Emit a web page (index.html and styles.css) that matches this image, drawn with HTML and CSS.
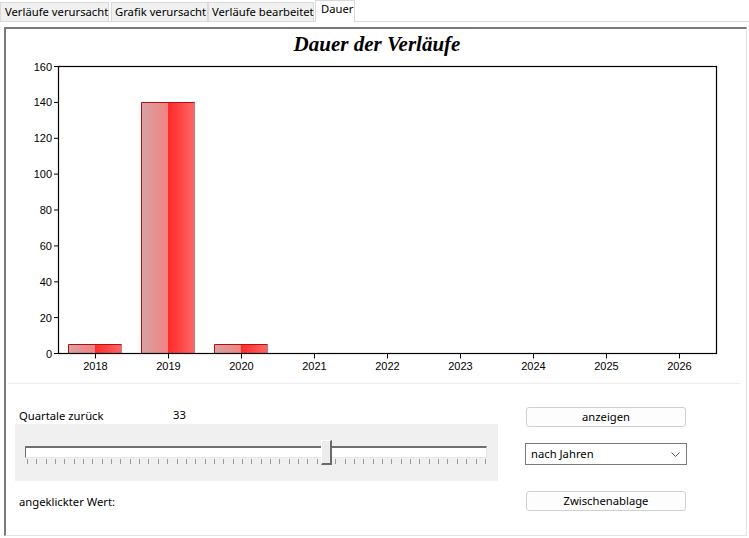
FILE: index.html
```html
<!DOCTYPE html>
<html lang="de">
<head>
<meta charset="utf-8">
<title>Dauer der Verläufe</title>
<link rel="stylesheet" href="styles.css">
</head>
<body>
<div class="tabs">
  <div class="tab t1">Verläufe verursacht</div>
  <div class="tab t2">Grafik verursacht</div>
  <div class="tab t3">Verläufe bearbeitet</div>
  <div class="tab active">Dauer</div>
</div>
<div class="panel">
  <svg class="chart" width="739" height="354" viewBox="0 0 739 354" xmlns="http://www.w3.org/2000/svg">
    <defs>
      <linearGradient id="gl" x1="0" y1="0" x2="1" y2="0">
        <stop offset="0" stop-color="#d6a2a2"/>
        <stop offset="1" stop-color="#f38282"/>
      </linearGradient>
      <linearGradient id="gr" x1="0" y1="0" x2="1" y2="0">
        <stop offset="0" stop-color="#ff2a2a"/>
        <stop offset="0.85" stop-color="#ff5e5e"/>
        <stop offset="1" stop-color="#d77474"/>
      </linearGradient>
    </defs>
    <text class="title" x="371" y="22" text-anchor="middle">Dauer der Verläufe</text>
    <g class="ylab" text-anchor="end">
      <text x="46" y="41.5">160</text>
      <text x="46" y="77.4">140</text>
      <text x="46" y="113.3">120</text>
      <text x="46" y="149.1">100</text>
      <text x="46" y="185">80</text>
      <text x="46" y="220.9">60</text>
      <text x="46" y="256.8">40</text>
      <text x="46" y="292.6">20</text>
      <text x="46" y="328.5">0</text>
    </g>
    <g class="axis" stroke="#000" stroke-width="1">
      <path d="M48 37.5H52M48 73.4H52M48 109.3H52M48 145.1H52M48 181H52M48 216.9H52M48 252.8H52M48 288.6H52M48 324.5H52"/>
      <path d="M89.5 324.5V329.5M162.5 324.5V329.5M235.5 324.5V329.5M308.5 324.5V329.5M381.5 324.5V329.5M454.5 324.5V329.5M527.5 324.5V329.5M600.5 324.5V329.5M673.5 324.5V329.5"/>
    </g>
    <g class="bars">
      <rect x="62" y="315.5" width="27" height="9" fill="url(#gl)"/>
      <rect x="89" y="315.5" width="27" height="9" fill="url(#gr)"/>
      <path d="M62.5 324V315.5H115.5" fill="none" stroke="#b01010"/>
      <rect x="135" y="73" width="27" height="251.5" fill="url(#gl)"/>
      <rect x="162" y="73" width="27" height="251.5" fill="url(#gr)"/>
      <path d="M135.5 324V73.5H188.5" fill="none" stroke="#b01010"/>
      <rect x="208" y="315.5" width="27" height="9" fill="url(#gl)"/>
      <rect x="235" y="315.5" width="27" height="9" fill="url(#gr)"/>
      <path d="M208.5 324V315.5H261.5" fill="none" stroke="#b01010"/>
    </g>
    <rect x="52.5" y="37.5" width="658" height="287" fill="none" stroke="#000" stroke-width="1.2"/>
    <g class="xlab" text-anchor="middle">
      <text x="89.5" y="340.5">2018</text>
      <text x="162.5" y="340.5">2019</text>
      <text x="235.5" y="340.5">2020</text>
      <text x="308.5" y="340.5">2021</text>
      <text x="381.5" y="340.5">2022</text>
      <text x="454.5" y="340.5">2023</text>
      <text x="527.5" y="340.5">2024</text>
      <text x="600.5" y="340.5">2025</text>
      <text x="673.5" y="340.5">2026</text>
    </g>
  </svg>
  <div class="sep"></div>
  <div class="controls">
    <div class="left">
      <div class="row1"><span class="lbl">Quartale zurück</span><span class="val">33</span></div>
      <div class="sliderbox">
        <div class="track"></div>
        <div class="ticks">
          <i></i><i></i><i></i><i></i><i></i><i></i><i></i><i></i><i></i><i></i>
          <i></i><i></i><i></i><i></i><i></i><i></i><i></i><i></i><i></i><i></i>
          <i></i><i></i><i></i><i></i><i></i><i></i><i></i><i></i><i></i><i></i>
          <i></i><i></i><i></i><i></i><i></i><i></i><i></i><i></i><i></i><i></i>
          <i></i><i></i><i></i><i></i><i></i><i></i><i></i><i></i><i></i><i></i>
        </div>
        <div class="thumb"></div>
      </div>
      <div class="clicked">angeklickter Wert:</div>
    </div>
    <div class="right">
      <div class="btn b1">anzeigen</div>
      <div class="select"><span>nach Jahren</span>
        <svg class="chev" width="9" height="5" viewBox="0 0 9 5"><path d="M0.5 0.5L4.5 4.5L8.5 0.5" fill="none" stroke="#555" stroke-width="1"/></svg>
      </div>
      <div class="btn b2">Zwischenablage</div>
    </div>
  </div>
</div>
</body>
</html>
```

FILE: styles.css
```css
* { box-sizing: border-box; }
html, body { margin: 0; padding: 0; background: #fff; }
body {
  width: 749px;
  height: 538px;
  overflow: hidden;
  font-family: "Noto Sans", "DejaVu Sans", sans-serif;
  font-size: 11.25px;
  color: #000;
}
.tabs {
  display: flex;
  align-items: flex-end;
  height: 22px;
  border-bottom: 1px solid #dadada;
}
.tab {
  height: 19px;
  margin-right: 1px;
  padding: 0 4px;
  background: #f0f0f0;
  border: 1px solid #d9d9d9;
  border-bottom: none;
  line-height: 18px;
  white-space: nowrap;
}
.tab.t1 { width: 109px; }
.tab.t2 { width: 97px; margin-left: 1px; margin-right: 0; padding-left: 3px; }
.tab.t3 { width: 106px; padding-left: 3px; }
.tab.active {
  width: 40px;
  height: 22px;
  margin-bottom: -1px;
  background: #fff;
  line-height: 16px;
  padding-left: 5px;
}
.panel {
  margin: 5px 0 0 4px;
  width: 743px;
  height: 509px;
  border-top: 2px solid #7a7a7a;
  border-left: 2px solid #7a7a7a;
  border-right: 1px solid #e3e3e3;
  border-bottom: 1px solid #e3e3e3;
  background: #fff;
}
.chart { display: block; }
.chart .title {
  font-family: "Liberation Serif", "Times New Roman", serif;
  font-weight: bold;
  font-style: italic;
  font-size: 21px;
}
.chart .ylab, .chart .xlab {
  font-family: "Liberation Sans", Arial, sans-serif;
  font-size: 11px;
  fill: #000;
}
.sep {
  margin-left: 2px;
  width: 732px;
  height: 1px;
  background: #ececec;
}
.controls {
  display: flex;
  padding-left: 9px;
}
.left { width: 483px; }
.row1 {
  display: flex;
  padding: 24px 0 0 4px;
  height: 40px;
  line-height: 16px;
}
.lbl { width: 154px; }
.val { margin-top: -1px; }
.sliderbox {
  position: relative;
  height: 57px;
  background: #f0f0f0;
  padding: 22px 11px 0 10px;
}
.track {
  height: 12px;
  background: #fff;
  border-top: 2px solid #6f6f6f;
  border-left: 1px solid #6f6f6f;
  border-right: 1px solid #e6e6e6;
  border-bottom: 1px solid #e6e6e6;
}
.ticks {
  display: flex;
  justify-content: space-between;
  height: 5px;
  margin-top: 1px;
  padding: 0 1px 0 2px;
}
.ticks i {
  display: block;
  width: 1px;
  height: 5px;
  background: #9a9a9a;
}
.thumb {
  position: absolute;
  left: 306px;
  top: 16px;
  width: 11px;
  height: 25px;
  background: #ececec;
  border-top: 1px solid #fff;
  border-left: 1px solid #fff;
  border-right: 2px solid #6a6a6a;
  border-bottom: 2px solid #6a6a6a;
}
.clicked {
  margin-top: 13px;
  padding-left: 4px;
  line-height: 16px;
}
.right {
  margin-left: 27px;
  padding-top: 23px;
  display: flex;
  flex-direction: column;
  width: 162px;
}
.btn {
  margin-left: 1px;
  width: 160px;
  height: 20px;
  border: 1px solid #d0d0d0;
  border-radius: 3px;
  background: #fdfdfd;
  text-align: center;
  line-height: 18px;
}
.select {
  margin-top: 16px;
  height: 22px;
  border: 1px solid #7a7a7a;
  background: #fff;
  display: flex;
  align-items: center;
  justify-content: space-between;
  padding: 0 6px 0 5px;
  line-height: 18px;
}
.b2 { margin-top: 26px; }
```
